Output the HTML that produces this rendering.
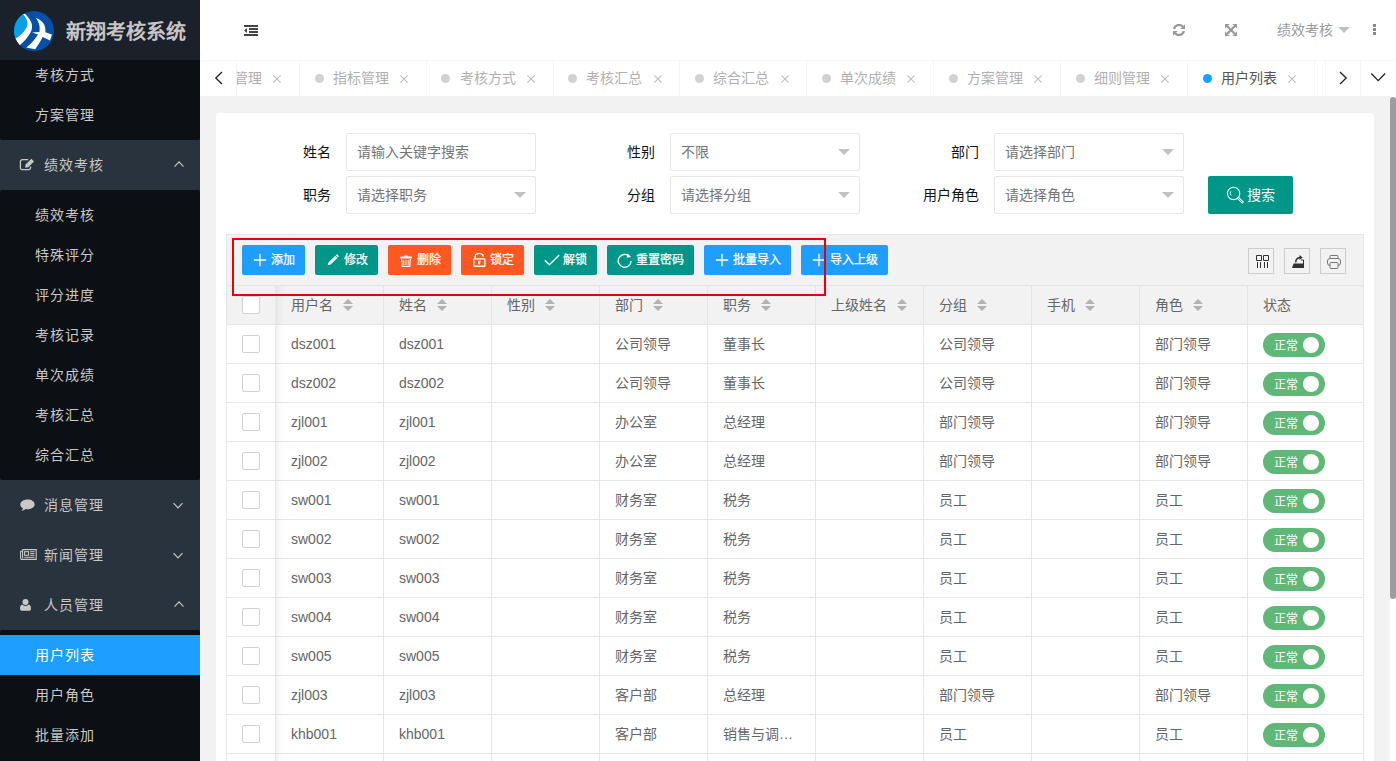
<!DOCTYPE html>
<html lang="zh-CN">
<head>
<meta charset="utf-8">
<title>新翔考核系统</title>
<style>
*{box-sizing:border-box;margin:0;padding:0}
html,body{width:1396px;height:761px;overflow:hidden}
body{font-family:"Liberation Sans",sans-serif;font-size:14px;color:#666;background:#f2f2f2;position:relative;line-height:1}
.abs{position:absolute}
svg{display:block}
/* sidebar */
#side{position:absolute;left:0;top:0;width:200px;height:761px;background:#28333e;overflow:hidden}
#logo{position:absolute;left:0;top:0;width:200px;height:60px;background:#1b212a}
#logo .t{position:absolute;left:66px;top:2px;height:60px;line-height:61px;font-size:20px;font-weight:bold;color:#c9c6c6;white-space:nowrap}
.sub{position:absolute;left:0;width:200px;background:#0c0f13;border-radius:2px}
.sub div{position:absolute;left:0;width:200px;height:40px;line-height:40px;padding-left:35px;color:#c9c8c6;letter-spacing:1px;white-space:nowrap}
.sub div.on{background:#1e9fff;color:#fff}
.mi{position:absolute;left:0;width:200px;height:50px;line-height:50px;color:#c9c8c6;letter-spacing:1px;white-space:nowrap}
.mi span{position:absolute;left:44px;top:0}
.mi svg{position:absolute}
/* header */
#hdr{position:absolute;left:200px;top:0;width:1196px;height:60px;background:#fff}
#tabs{position:absolute;left:200px;top:60px;width:1196px;height:36px;background:#fff;border-top:1px solid #f6f6f6}
.tab{position:absolute;top:0;height:35px;line-height:35px;color:#b0b0b0;white-space:nowrap}
.sep{position:absolute;top:0;width:1px;height:35px;background:#f4f4f4}
/* card */
#card{position:absolute;left:216px;top:113px;width:1158px;height:700px;background:#fff;border-radius:3px}
.lbl{position:absolute;height:38px;line-height:38px;color:#111;text-align:right;width:100px;white-space:nowrap}
.inp{position:absolute;width:190px;height:38px;border:1px solid #e6e6e6;border-radius:2px;background:#fff;line-height:36px;padding-left:10px;color:#757575;white-space:nowrap}
.inp i{position:absolute;right:9px;top:15px;width:0;height:0;border:6px solid transparent;border-top-color:#c2c2c2}
.btn{position:absolute;top:245px;height:30px;border-radius:2px;color:#fff;font-size:12px;line-height:30px;white-space:nowrap}
.btn span{position:absolute;top:0;-webkit-text-stroke:0.250px #fff}
.btn svg{position:absolute}

#tb{position:absolute;left:10px;top:121px;width:1138px;height:700px;background:#fff;border:1px solid #e6e6e6;border-bottom:0}
#tool{position:absolute;left:0;top:0;width:1136px;height:50px;background:#f2f2f2}
#th{position:absolute;left:0;top:50px;width:1136px;height:40px;background:#f2f2f2;border-top:1px solid #e6e6e6;border-bottom:1px solid #e6e6e6}
.tr{position:absolute;left:0;width:1136px;height:39px;border-bottom:1px solid #e6e6e6}
.vl{position:absolute;top:51px;width:1px;height:700px;background:#e6e6e6}
.c{position:absolute;top:0;height:38px;line-height:38px;white-space:nowrap;color:#666}
.ck{position:absolute;left:15px;width:18px;height:18px;border:1px solid #d2d2d2;border-radius:2px;background:#fff}
.sort{position:absolute;top:12px;width:10px;height:12px}
.sort:before,.sort:after{content:"";position:absolute;left:0;width:0;height:0;border:5px solid transparent}
.sort:before{top:-4px;border-bottom-color:#b2b2b2}
.sort:after{top:8px;border-top-color:#b2b2b2}
.sw{position:absolute;left:1036px;top:8px;width:62px;height:24px;border-radius:12px;background:#5fb878;color:#fff;font-size:12px;line-height:24px}
.sw span{position:absolute;left:11px;top:1px}
.sw i{position:absolute;left:40px;top:4px;width:16px;height:16px;border-radius:50%;background:#fff}
.tbtn{position:absolute;top:13px;width:26px;height:26px;border:1px solid #ccc}
</style>
</head>
<body>
<div id="side">
  <div class="sub" style="top:50px;height:90px"><div style="top:5px">考核方式</div><div style="top:45px">方案管理</div></div>
  <div id="logo"><svg style="position:absolute;left:14px;top:11px" width="40" height="40" viewBox="0 0 40 40"><defs><clipPath id="lc"><circle cx="20" cy="20" r="20"/></clipPath></defs><g clip-path="url(#lc)"><rect width="40" height="40" fill="#0450a6"/><path d="M-2 -2 L9.400 3 C13 8 14.500 12 12.500 16.500 C10.500 21 6 25 1 28.200 L-2 30z" fill="#08a0e9"/><path d="M9.200 3.200 L10.800 2.600 C16 8 19.500 13 17.600 19 C15.500 25 10.500 30 5.600 34.600 L1.200 28 C6 25 10.500 21 12.500 16.500 C14.500 12 13 8 9.200 3.200z" fill="#fff"/><path d="M21.600 6.800 C26.500 8.500 30.500 12 31.300 17 L31.400 21.300 L38 23.400 L36 29.600 L28.800 26.100 C26.500 30.500 24 34.500 21.200 38.200 L12.200 36.600 C17 33 21 28.500 24 23.600 L18 21.600 L25.400 21 C26.300 16 25.200 11 21.600 6.800z" fill="#fff"/></g></svg><div class="t">新翔考核系统</div></div>
  <div class="mi" style="top:140px"><svg style="left:19px;top:18px" width="17" height="14" viewBox="0 0 17 14"><path d="M9.2 1.7H3.3a1.9 1.9 0 0 0-1.9 1.9v6.2a1.9 1.9 0 0 0 1.9 1.9h6.3a1.9 1.9 0 0 0 1.9-1.9V8.4" fill="none" stroke="#c9c8c6" stroke-width="1.3"/><path d="M6.6 6.6 L12.4 0.8 L15 3.4 L9.2 9.2 L6.1 9.7z" fill="#c9c8c6"/></svg><span>绩效考核</span><svg style="left:173.15px;top:20px" width="12" height="8" viewBox="0 0 12 8"><path d="M1.5 6.6 L6 1.9 L10.5 6.6" fill="none" stroke="#c9c8c6" stroke-width="1.2"/></svg></div>
  <div class="sub" style="top:190px;height:290px"><div style="top:5px">绩效考核</div><div style="top:45px">特殊评分</div><div style="top:85px">评分进度</div><div style="top:125px">考核记录</div><div style="top:165px">单次成绩</div><div style="top:205px">考核汇总</div><div style="top:245px">综合汇总</div></div>
  <div class="mi" style="top:480px"><svg style="left:20px;top:19px" width="15" height="13" viewBox="0 0 15 13"><path d="M7.5 0.4C3.5 0.4 0.3 2.6 0.3 5.4c0 1.6 1.1 3 2.7 3.9c-0.3 1-0.9 1.9-1.7 2.6c1.7-0.1 3.200-0.800 4.300-1.800c0.600 0.100 1.200 0.200 1.900 0.200c4 0 7.200-2.200 7.200-5S11.500 0.400 7.500 0.400z" fill="#c9c8c6"/></svg><span>消息管理</span><svg style="left:172.15px;top:21.8px" width="12" height="8" viewBox="0 0 12 8"><path d="M1.5 1.2 L6 5.9 L10.5 1.2" fill="none" stroke="#c9c8c6" stroke-width="1.2"/></svg></div>
  <div class="mi" style="top:530px"><svg style="left:20px;top:19px" width="17" height="11" viewBox="0 0 17 11"><path d="M2.6 0.600H16.200V10.400H1.900a1.300 1.300 0 0 1-1.300-1.300V2.200H2.600" fill="none" stroke="#c9c8c6" stroke-width="1.100"/><path d="M2.600 0.600V9.200" stroke="#c9c8c6" stroke-width="1.100" fill="none"/><rect x="4.600" y="2.700" width="4" height="3.600" fill="none" stroke="#c9c8c6" stroke-width="1.100"/><path d="M10.300 2.700h4.200M10.300 4.500h4.200M10.300 6.300h4.200M4.300 8.300h10.200" stroke="#c9c8c6" stroke-width="1" fill="none"/></svg><span>新闻管理</span><svg style="left:172.15px;top:21.8px" width="12" height="8" viewBox="0 0 12 8"><path d="M1.5 1.2 L6 5.9 L10.5 1.2" fill="none" stroke="#c9c8c6" stroke-width="1.2"/></svg></div>
  <div class="mi" style="top:580px"><svg style="left:20px;top:19px" width="11" height="12" viewBox="0 0 11 12"><circle cx="5.500" cy="3.100" r="3" fill="#c9c8c6"/><path d="M2.200 5.600C0.800 6 0 7.400 0 9.400c0 1.400 0.800 2.400 1.900 2.400h7.200c1.100 0 1.900-1 1.900-2.400c0-2-0.800-3.400-2.200-3.800c-0.800 0.800-2 1.300-3.300 1.300S3 6.400 2.200 5.600z" fill="#c9c8c6"/></svg><span>人员管理</span><svg style="left:173.15px;top:20px" width="12" height="8" viewBox="0 0 12 8"><path d="M1.5 6.6 L6 1.9 L10.5 6.6" fill="none" stroke="#c9c8c6" stroke-width="1.2"/></svg></div>
  <div class="sub" style="top:630px;height:200px"><div class="on" style="top:5px">用户列表</div><div style="top:45px">用户角色</div><div style="top:85px">批量添加</div></div>
</div>
<div id="hdr">
  <svg class="abs" style="left:44px;top:25px" width="14" height="11" viewBox="0 0 14 11"><path d="M0 0h14v2H0zM5 3h9v2H5zM5 6h9v2H5zM0 9h14v2H0zM0 5.500L3 3v5z" fill="#444"/></svg>
  <svg class="abs" style="left:973px;top:24px" width="12" height="12" viewBox="0 0 12 12"><path d="M1.100 5A5 5 0 0 1 9.800 2.700M10.900 7A5 5 0 0 1 2.200 9.300" stroke="#999" stroke-width="2.200" fill="none"/><path d="M12 0.300V5H7.300zM0 11.700V7H4.700z" fill="#999"/></svg>
  <svg class="abs" style="left:1025px;top:24px" width="12" height="12" viewBox="0 0 12 12"><path d="M2 2L10 10M10 2L2 10" stroke="#999" stroke-width="2.200" fill="none"/><path d="M0 0h4.600L0 4.600zM12 0v4.600L7.400 0zM0 12V7.400L4.600 12zM12 12H7.400L12 7.400z" fill="#999"/></svg>
  <div class="abs" style="left:1077px;top:0;height:60px;line-height:61px;color:#999;white-space:nowrap">绩效考核</div>
  <div class="abs" style="left:1138px;top:26.800px;width:0;height:0;border:6px solid transparent;border-top:6.500px solid #c2c2c2;border-bottom:0"></div>
  <div class="abs" style="left:1172.500px;top:24px;width:3px;height:3px;background:#888;box-shadow:0 4px 0 #888,0 8px 0 #888"></div>
</div>
<div id="tabs">
  <svg class="abs" style="left:14px;top:10px" width="10" height="14" viewBox="0 0 10 14"><path d="M8 1L1.800 7L8 13" fill="none" stroke="#222" stroke-width="1.300"/></svg>
  <div class="sep" style="left:36px"></div>
  <div class="abs" style="left:37px;top:0;width:62px;height:35px;overflow:hidden"><div class="tab" style="left:-3px">管理</div><svg class="abs" style="left:36px;top:13.500px" width="8" height="8" viewBox="0 0 8 8"><path d="M0.400 0.400L7.600 7.600M7.600 0.400L0.400 7.600" stroke="#bdbdbd" stroke-width="1.100" fill="none"/></svg></div>
  <div class="sep" style="left:99px"></div>
  <div class="abs" style="left:115px;top:13px;width:9px;height:9px;border-radius:50%;background:#d2d2d2"></div>
  <div class="tab" style="left:132.7px;color:#b0b0b0">指标管理</div>
  <svg class="abs" style="left:199.9px;top:13.500px" width="8" height="8" viewBox="0 0 8 8"><path d="M0.400 0.400L7.600 7.600M7.600 0.400L0.400 7.600" stroke="#bdbdbd" stroke-width="1.100" fill="none"/></svg>
  <div class="sep" style="left:226px"></div>
  <div class="abs" style="left:241px;top:13px;width:9px;height:9px;border-radius:50%;background:#d2d2d2"></div>
  <div class="tab" style="left:259.6px;color:#b0b0b0">考核方式</div>
  <svg class="abs" style="left:326.8px;top:13.500px" width="8" height="8" viewBox="0 0 8 8"><path d="M0.400 0.400L7.600 7.600M7.600 0.400L0.400 7.600" stroke="#bdbdbd" stroke-width="1.100" fill="none"/></svg>
  <div class="sep" style="left:353px"></div>
  <div class="abs" style="left:368px;top:13px;width:9px;height:9px;border-radius:50%;background:#d2d2d2"></div>
  <div class="tab" style="left:386.4px;color:#b0b0b0">考核汇总</div>
  <svg class="abs" style="left:453.6px;top:13.500px" width="8" height="8" viewBox="0 0 8 8"><path d="M0.400 0.400L7.600 7.600M7.600 0.400L0.400 7.600" stroke="#bdbdbd" stroke-width="1.100" fill="none"/></svg>
  <div class="sep" style="left:479px"></div>
  <div class="abs" style="left:495px;top:13px;width:9px;height:9px;border-radius:50%;background:#d2d2d2"></div>
  <div class="tab" style="left:513.3px;color:#b0b0b0">综合汇总</div>
  <svg class="abs" style="left:580.5px;top:13.500px" width="8" height="8" viewBox="0 0 8 8"><path d="M0.400 0.400L7.600 7.600M7.600 0.400L0.400 7.600" stroke="#bdbdbd" stroke-width="1.100" fill="none"/></svg>
  <div class="sep" style="left:606px"></div>
  <div class="abs" style="left:622px;top:13px;width:9px;height:9px;border-radius:50%;background:#d2d2d2"></div>
  <div class="tab" style="left:640.1px;color:#b0b0b0">单次成绩</div>
  <svg class="abs" style="left:707.3px;top:13.500px" width="8" height="8" viewBox="0 0 8 8"><path d="M0.400 0.400L7.600 7.600M7.600 0.400L0.400 7.600" stroke="#bdbdbd" stroke-width="1.100" fill="none"/></svg>
  <div class="sep" style="left:733px"></div>
  <div class="abs" style="left:749px;top:13px;width:9px;height:9px;border-radius:50%;background:#d2d2d2"></div>
  <div class="tab" style="left:767.0px;color:#b0b0b0">方案管理</div>
  <svg class="abs" style="left:834.2px;top:13.500px" width="8" height="8" viewBox="0 0 8 8"><path d="M0.400 0.400L7.600 7.600M7.600 0.400L0.400 7.600" stroke="#bdbdbd" stroke-width="1.100" fill="none"/></svg>
  <div class="sep" style="left:860px"></div>
  <div class="abs" style="left:876px;top:13px;width:9px;height:9px;border-radius:50%;background:#d2d2d2"></div>
  <div class="tab" style="left:893.9px;color:#b0b0b0">细则管理</div>
  <svg class="abs" style="left:961.1px;top:13.500px" width="8" height="8" viewBox="0 0 8 8"><path d="M0.400 0.400L7.600 7.600M7.600 0.400L0.400 7.600" stroke="#bdbdbd" stroke-width="1.100" fill="none"/></svg>
  <div class="sep" style="left:987px"></div>
  <div class="abs" style="left:1003px;top:13px;width:9px;height:9px;border-radius:50%;background:#1e9fff"></div>
  <div class="tab" style="left:1021.3px;color:#555">用户列表</div>
  <svg class="abs" style="left:1087.9px;top:13.500px" width="8" height="8" viewBox="0 0 8 8"><path d="M0.400 0.400L7.600 7.600M7.600 0.400L0.400 7.600" stroke="#bdbdbd" stroke-width="1.100" fill="none"/></svg>
  <div class="sep" style="left:1114px"></div>
  <div class="abs" style="left:1125px;top:0;width:71px;height:35px;background:#fff"></div>
  <div class="sep" style="left:1125px"></div>
  <div class="sep" style="left:1160px"></div>
  <svg class="abs" style="left:1138px;top:10px" width="10" height="14" viewBox="0 0 10 14"><path d="M2 1L8.200 7L2 13" fill="none" stroke="#222" stroke-width="1.300"/></svg>
  <svg class="abs" style="left:1170px;top:11.400px" width="16" height="11" viewBox="0 0 16 11"><path d="M1.300 1.500L8.200 8.600L15.100 1.500" fill="none" stroke="#222" stroke-width="1.300"/></svg>
</div>
<div id="card">
<div class="lbl" style="left:15px;top:20px">姓名</div>
<div class="inp" style="left:130px;top:20px">请输入关键字搜索</div>
<div class="lbl" style="left:339px;top:20px">性别</div>
<div class="inp" style="left:454px;top:20px">不限<i></i></div>
<div class="lbl" style="left:663px;top:20px">部门</div>
<div class="inp" style="left:778px;top:20px">请选择部门<i></i></div>
<div class="lbl" style="left:15px;top:63px">职务</div>
<div class="inp" style="left:130px;top:63px">请选择职务<i></i></div>
<div class="lbl" style="left:339px;top:63px">分组</div>
<div class="inp" style="left:454px;top:63px">请选择分组<i></i></div>
<div class="lbl" style="left:663px;top:63px">用户角色</div>
<div class="inp" style="left:778px;top:63px">请选择角色<i></i></div>
<div class="abs" style="left:992px;top:63px;width:85px;height:38px;border-radius:2px;background:#009688;color:#fff;line-height:38px;white-space:nowrap"><svg class="abs" style="left:18px;top:10px" width="19" height="19" viewBox="0 0 19 19"><circle cx="7.600" cy="7.400" r="6.200" fill="none" stroke="#fff" stroke-width="1.100"/><path d="M12.300 12.100l4 4" stroke="#fff" stroke-width="2.700" stroke-linecap="round" fill="none"/><path d="M12.500 12.300l3.700 3.700" stroke="#009688" stroke-width="0.900" stroke-linecap="round" fill="none"/><path d="M4.900 5.200a3.600 3.600 0 0 0 0.100 4.300" stroke="#fff" stroke-width="0.900" fill="none"/></svg><span class="abs" style="left:39px;top:0">搜索</span></div>
<div id="tb"><div id="tool"><div class="btn" style="left:15px;top:10px;width:63px;background:#1e9fff"><svg style="left:10.700px;top:7.600px" width="14" height="14" viewBox="0 0 14 14"><path d="M7 0.800V13.200M0.800 7H13.200" stroke="#fff" stroke-width="1.300" fill="none"/></svg><span style="left:29px">添加</span></div><div class="btn" style="left:88px;top:10px;width:63px;background:#009688"><svg style="left:12.200px;top:9.300px" width="12" height="12" viewBox="0 0 13 13"><path d="M0.700 12.300L1.600 9.200L8.900 1.900L11.200 4.200L3.900 11.500zM9.500 1.300L10.200 0.600a0.800 0.800 0 0 1 1.100 0l1.200 1.200a0.800 0.800 0 0 1 0 1.100L11.800 3.600z" fill="#fff"/></svg><span style="left:29px">修改</span></div><div class="btn" style="left:161px;top:10px;width:63px;background:#ff5722"><svg style="left:11px;top:8.700px" width="14" height="14" viewBox="0 0 14 14"><rect x="1" y="2.500" width="12" height="2" rx="1" fill="#fff"/><rect x="5" y="1.400" width="4" height="1.600" rx="0.700" fill="#fff"/><path d="M2.700 5L3.200 12.500H10.800L11.300 5" fill="none" stroke="#fff" stroke-width="1.100"/><path d="M4.600 6V11.500M6.200 6V11.500M7.800 6V11.500M9.400 6V11.500" stroke="#fff" stroke-width="0.900" opacity="0.800" fill="none"/></svg><span style="left:29px">删除</span></div><div class="btn" style="left:234px;top:10px;width:63px;background:#ff5722"><svg style="left:11.500px;top:8px" width="13" height="15" viewBox="0 0 13 15"><rect x="0.850" y="5.950" width="11" height="7.300" rx="0.600" fill="none" stroke="#fff" stroke-width="1.300"/><path d="M1.950 5.900V4.650A4.300 4.300 0 0 1 10.400 3.500" fill="none" stroke="#fff" stroke-width="1.300"/><path d="M4.800 7.800h2.900l-0.900 3.700h-1.100z" fill="#fff"/></svg><span style="left:29px">锁定</span></div><div class="btn" style="left:307px;top:10px;width:63px;background:#009688"><svg style="left:9.800px;top:9px" width="16" height="12" viewBox="0 0 16 12"><path d="M0.800 6.200L5.400 10.800L15.200 1" stroke="#fff" stroke-width="1.400" fill="none"/></svg><span style="left:29px">解锁</span></div><div class="btn" style="left:380px;top:10px;width:87px;background:#009688"><svg style="left:10.300px;top:7.500px" width="15.500" height="15.500" viewBox="0 0 15 15"><path d="M13.600 7.700A6.200 6.200 0 1 1 11.600 3" stroke="#fff" stroke-width="1.300" fill="none"/><path d="M10.300 0.400l3.300 3.500l-4.300 0.600z" fill="#fff"/></svg><span style="left:29px">重置密码</span></div><div class="btn" style="left:477px;top:10px;width:87px;background:#1e9fff"><svg style="left:10.700px;top:7.600px" width="14" height="14" viewBox="0 0 14 14"><path d="M7 0.800V13.200M0.800 7H13.200" stroke="#fff" stroke-width="1.300" fill="none"/></svg><span style="left:29px">批量导入</span></div><div class="btn" style="left:574px;top:10px;width:87px;background:#1e9fff"><svg style="left:10.700px;top:7.600px" width="14" height="14" viewBox="0 0 14 14"><path d="M7 0.800V13.200M0.800 7H13.200" stroke="#fff" stroke-width="1.300" fill="none"/></svg><span style="left:29px">导入上级</span></div><div class="tbtn" style="left:1021px"><svg class="abs" style="left:0;top:0" width="24" height="24" viewBox="0 0 24 24"><path d="M7.500 6.500h5v5h-5zM14.500 6.500h5v5h-5z" fill="none" stroke="#333" stroke-width="1"/><path d="M8.500 13v6M11.500 13v6M15.500 13v6M18.500 13v6" stroke="#333" stroke-width="1" fill="none"/></svg></div><div class="tbtn" style="left:1057px"><svg class="abs" style="left:0;top:0" width="24" height="24" viewBox="0 0 24 24"><path d="M7 19L8.600 14.500H19V19z" fill="#333"/><path d="M16 11H18.500V15" fill="none" stroke="#333" stroke-width="1"/><path d="M10.700 13.500Q10.700 9 15 8.500" fill="none" stroke="#333" stroke-width="1.500"/><path d="M14.500 6L17.700 8.500L14.500 11z" fill="#333"/></svg></div><div class="tbtn" style="left:1093px"><svg class="abs" style="left:0;top:0" width="24" height="24" viewBox="0 0 24 24"><path d="M9 9.500V7.500a1 1 0 0 1 1-1h6a1 1 0 0 1 1 1V9.500" fill="none" stroke="#777" stroke-width="1"/><rect x="6.500" y="9.500" width="13" height="7" rx="2.500" fill="none" stroke="#777" stroke-width="1"/><rect x="9" y="13.500" width="8" height="6" rx="1" fill="#f2f2f2" stroke="#777" stroke-width="1"/></svg></div></div><div id="th"><div class="ck" style="top:10px"></div><div class="c" style="left:64px">用户名</div><div class="sort" style="left:116px"></div><div class="c" style="left:172px">姓名</div><div class="sort" style="left:210px"></div><div class="c" style="left:280px">性别</div><div class="sort" style="left:318px"></div><div class="c" style="left:388px">部门</div><div class="sort" style="left:426px"></div><div class="c" style="left:496px">职务</div><div class="sort" style="left:534px"></div><div class="c" style="left:604px">上级姓名</div><div class="sort" style="left:670px"></div><div class="c" style="left:712px">分组</div><div class="sort" style="left:750px"></div><div class="c" style="left:820px">手机</div><div class="sort" style="left:858px"></div><div class="c" style="left:928px">角色</div><div class="sort" style="left:966px"></div><div class="c" style="left:1036px">状态</div></div><div class="tr" style="top:90px"><div class="ck" style="top:10px"></div><div class="c" style="left:64px">dsz001</div><div class="c" style="left:172px">dsz001</div><div class="c" style="left:388px">公司领导</div><div class="c" style="left:496px">董事长</div><div class="c" style="left:712px">公司领导</div><div class="c" style="left:928px">部门领导</div><div class="sw"><span>正常</span><i></i></div></div><div class="tr" style="top:129px"><div class="ck" style="top:10px"></div><div class="c" style="left:64px">dsz002</div><div class="c" style="left:172px">dsz002</div><div class="c" style="left:388px">公司领导</div><div class="c" style="left:496px">董事长</div><div class="c" style="left:712px">公司领导</div><div class="c" style="left:928px">部门领导</div><div class="sw"><span>正常</span><i></i></div></div><div class="tr" style="top:168px"><div class="ck" style="top:10px"></div><div class="c" style="left:64px">zjl001</div><div class="c" style="left:172px">zjl001</div><div class="c" style="left:388px">办公室</div><div class="c" style="left:496px">总经理</div><div class="c" style="left:712px">部门领导</div><div class="c" style="left:928px">部门领导</div><div class="sw"><span>正常</span><i></i></div></div><div class="tr" style="top:207px"><div class="ck" style="top:10px"></div><div class="c" style="left:64px">zjl002</div><div class="c" style="left:172px">zjl002</div><div class="c" style="left:388px">办公室</div><div class="c" style="left:496px">总经理</div><div class="c" style="left:712px">部门领导</div><div class="c" style="left:928px">部门领导</div><div class="sw"><span>正常</span><i></i></div></div><div class="tr" style="top:246px"><div class="ck" style="top:10px"></div><div class="c" style="left:64px">sw001</div><div class="c" style="left:172px">sw001</div><div class="c" style="left:388px">财务室</div><div class="c" style="left:496px">税务</div><div class="c" style="left:712px">员工</div><div class="c" style="left:928px">员工</div><div class="sw"><span>正常</span><i></i></div></div><div class="tr" style="top:285px"><div class="ck" style="top:10px"></div><div class="c" style="left:64px">sw002</div><div class="c" style="left:172px">sw002</div><div class="c" style="left:388px">财务室</div><div class="c" style="left:496px">税务</div><div class="c" style="left:712px">员工</div><div class="c" style="left:928px">员工</div><div class="sw"><span>正常</span><i></i></div></div><div class="tr" style="top:324px"><div class="ck" style="top:10px"></div><div class="c" style="left:64px">sw003</div><div class="c" style="left:172px">sw003</div><div class="c" style="left:388px">财务室</div><div class="c" style="left:496px">税务</div><div class="c" style="left:712px">员工</div><div class="c" style="left:928px">员工</div><div class="sw"><span>正常</span><i></i></div></div><div class="tr" style="top:363px"><div class="ck" style="top:10px"></div><div class="c" style="left:64px">sw004</div><div class="c" style="left:172px">sw004</div><div class="c" style="left:388px">财务室</div><div class="c" style="left:496px">税务</div><div class="c" style="left:712px">员工</div><div class="c" style="left:928px">员工</div><div class="sw"><span>正常</span><i></i></div></div><div class="tr" style="top:402px"><div class="ck" style="top:10px"></div><div class="c" style="left:64px">sw005</div><div class="c" style="left:172px">sw005</div><div class="c" style="left:388px">财务室</div><div class="c" style="left:496px">税务</div><div class="c" style="left:712px">员工</div><div class="c" style="left:928px">员工</div><div class="sw"><span>正常</span><i></i></div></div><div class="tr" style="top:441px"><div class="ck" style="top:10px"></div><div class="c" style="left:64px">zjl003</div><div class="c" style="left:172px">zjl003</div><div class="c" style="left:388px">客户部</div><div class="c" style="left:496px">总经理</div><div class="c" style="left:712px">部门领导</div><div class="c" style="left:928px">部门领导</div><div class="sw"><span>正常</span><i></i></div></div><div class="tr" style="top:480px"><div class="ck" style="top:10px"></div><div class="c" style="left:64px">khb001</div><div class="c" style="left:172px">khb001</div><div class="c" style="left:388px">客户部</div><div class="c" style="left:496px">销售与调…</div><div class="c" style="left:712px">员工</div><div class="c" style="left:928px">员工</div><div class="sw"><span>正常</span><i></i></div></div><div class="tr" style="top:519px"></div><div class="abs" style="left:49px;top:51px;width:9px;height:700px;background:linear-gradient(to right,rgba(0,0,0,.05),rgba(0,0,0,.02) 40%,rgba(0,0,0,0))"></div><div class="vl" style="left:48px"></div><div class="vl" style="left:156px"></div><div class="vl" style="left:264px"></div><div class="vl" style="left:372px"></div><div class="vl" style="left:480px"></div><div class="vl" style="left:588px"></div><div class="vl" style="left:696px"></div><div class="vl" style="left:804px"></div><div class="vl" style="left:912px"></div><div class="vl" style="left:1020px"></div></div>
<div class="abs" style="left:16px;top:125px;width:594px;height:57.500px;border:2px solid #e60012"></div>
</div>
<div class="abs" style="left:1390px;top:96px;width:6px;height:665px;background:#fff"></div>
<div class="abs" style="left:1390px;top:97px;width:6px;height:502px;background:#9b9ca0;border-radius:3px"></div>
</body>
</html>
